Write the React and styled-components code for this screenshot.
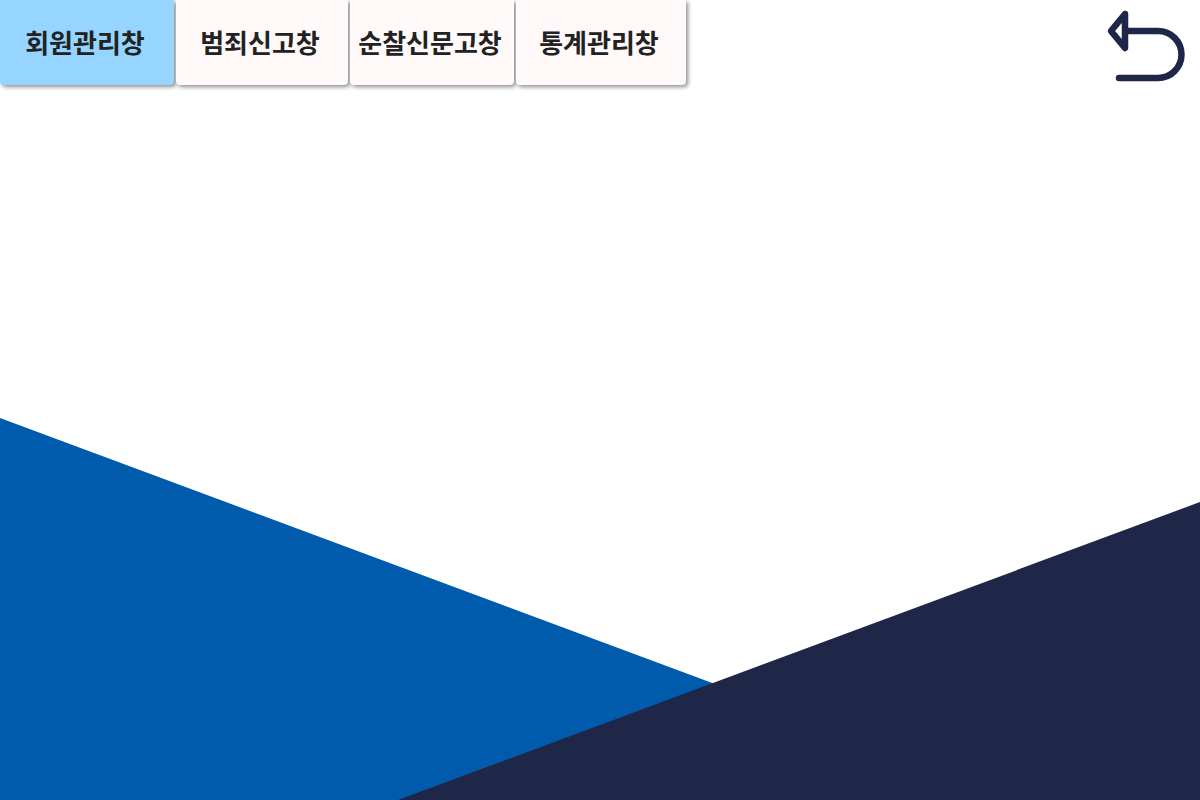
import React from "react";
import styled, { createGlobalStyle } from "styled-components";

const GlobalStyle = createGlobalStyle`
  html, body {
    margin: 0;
    padding: 0;
    background: #fff;
  }
  body {
    font-family: "Noto Sans CJK KR", "Noto Sans", sans-serif;
  }
`;

const Page = styled.div`
  position: relative;
  width: 100%;
  height: 100vh;
  overflow: hidden;
`;

const Header = styled.div`
  position: relative;
  z-index: 1;
  display: flex;
  justify-content: space-between;
  align-items: flex-start;
`;

const TabBar = styled.div`
  display: flex;
  gap: 2px;
`;

const Tab = styled.button`
  width: ${(props) => props.width}px;
  height: 85px;
  border: none;
  border-radius: 0 0 4px 4px;
  background-color: ${(props) => (props.active ? "#95d5ff" : "#fffaf9")};
  box-shadow: 2px 2px 4px rgba(0, 0, 0, 0.45);
  font-family: "Noto Sans CJK KR", sans-serif;
  font-size: 26px;
  font-weight: 700;
  color: #222;
  padding: 0 4px 2px 0;
  white-space: nowrap;
  cursor: pointer;
`;

const BackButton = styled.button`
  width: 90px;
  height: 92px;
  margin-right: 8px;
  border: none;
  background: none;
  padding: 0;
  cursor: pointer;
`;

const Backdrop = styled.svg`
  position: absolute;
  left: 0;
  bottom: 0;
  width: 100%;
  height: 382px;
  display: block;
`;

const tabs = [
  { label: "회원관리창", width: 174, active: true },
  { label: "범죄신고창", width: 172 },
  { label: "순찰신문고창", width: 164 },
  { label: "통계관리창", width: 170 },
];

export default function App() {
  return (
    <>
      <GlobalStyle />
      <Page>
        <Header>
          <TabBar>
            {tabs.map((t) => (
              <Tab key={t.label} width={t.width} active={t.active}>
                {t.label}
              </Tab>
            ))}
          </TabBar>
          <BackButton aria-label="back">
            <svg width="90" height="92" viewBox="1102 0 90 92" fill="none">
              <path
                d="M1125 14 L1111 31 L1125 48 Z"
                stroke="#1f2749"
                strokeWidth="6.5"
                strokeLinejoin="round"
              />
              <path
                d="M1126 31 H1158 A23.5 23.5 0 0 1 1158 78 H1119"
                stroke="#1f2749"
                strokeWidth="6.5"
                strokeLinecap="round"
              />
            </svg>
          </BackButton>
        </Header>
        <Backdrop viewBox="0 0 1200 382" preserveAspectRatio="none">
          <polygon points="0,0 1027,382 0,382" fill="#005bac" />
          <polygon points="398,382 1200,84 1200,382" fill="#1f2749" />
        </Backdrop>
      </Page>
    </>
  );
}
